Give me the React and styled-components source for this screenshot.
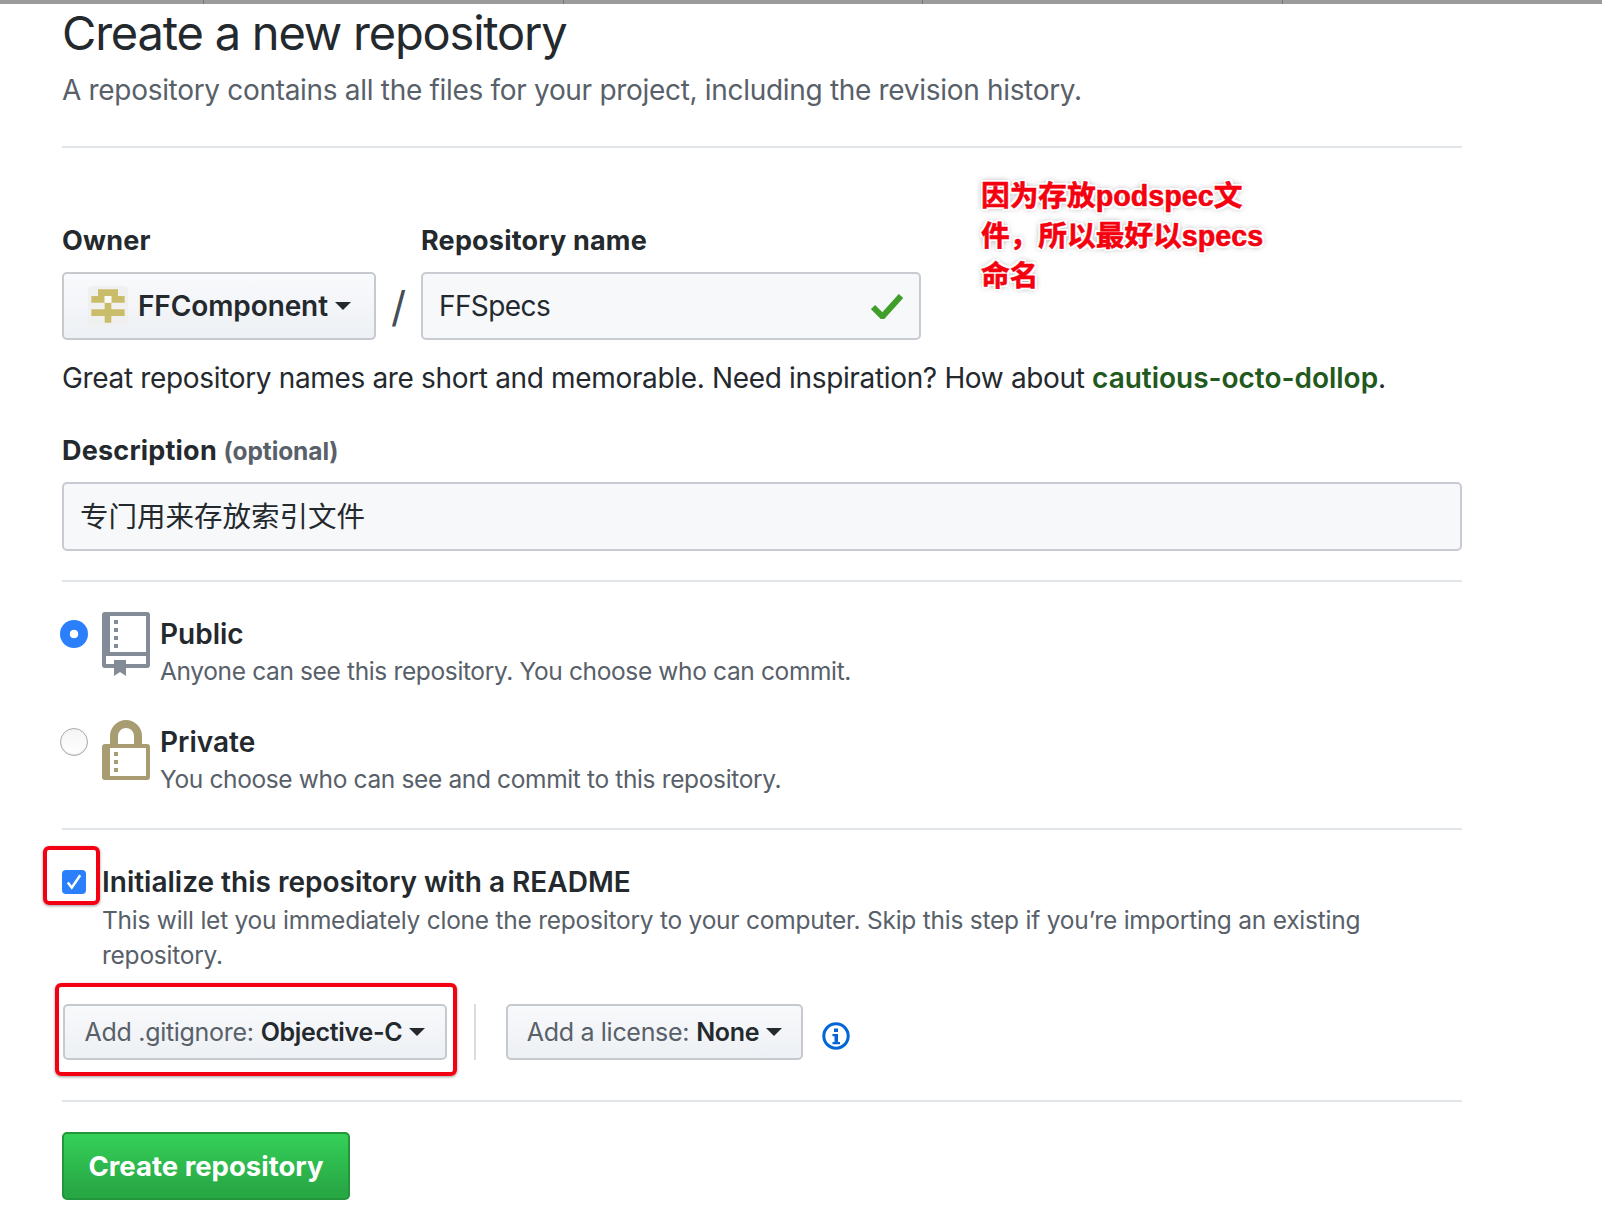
import React from "react";
import styled, { createGlobalStyle } from "styled-components";

const Global = createGlobalStyle`
  html, body { margin: 0; padding: 0; background: #fff; }
  body { font-family: Inter, "Noto Sans CJK SC", "Liberation Sans", sans-serif; color: #24292e; -webkit-font-smoothing: antialiased; }
  * { box-sizing: border-box; }
`;

const Shell = styled.div`position: relative; width: 1602px; height: 1206px; overflow: hidden;`;
const TopBar = styled.div`display: grid; grid-template-columns: 203px 359px 358px 359px 1fr; gap: 1px; height: 4px; background: #777;`;
const TopSegment = styled.div`background: #9b9b9b;`;
const Page = styled.main`width: 1462px; padding-left: 62px;`;
const Title = styled.h1`margin: 0; font-size: 47px; line-height: 57px; font-weight: 400; letter-spacing: -1.2px; white-space: nowrap;`;
const Subtitle = styled.p`margin: 11px 0 0; font-size: 28px; line-height: 36px; letter-spacing: -0.31px; color: #586069; white-space: nowrap;`;
const Divider = styled.hr`border: 0; margin: ${p => p.$top || 0}px 0 0; height: 2px; background: #e1e4e8;`;
const NameRow = styled.div`display: flex; align-items: flex-end; margin-top: 75px;`;
const Field = styled.div`display: flex; flex-direction: column; gap: ${p => p.$gap || 13}px;`;
const Label = styled.label`font-size: 27px; line-height: 36px; font-weight: 700; letter-spacing: 0.2px; white-space: nowrap;`;
const Optional = styled.span`font-size: 24.5px; letter-spacing: -0.1px; color: #586069;`;
const OwnerButton = styled.div`
  display: flex; align-items: center; width: 314px; height: 68px; padding-left: 24px;
  border: 2px solid #c6cace; border-radius: 5px; background: linear-gradient(#f9fafc, #edf0f4);
  font-size: 28px; font-weight: 600; letter-spacing: -0.1px;
`;
const Avatar = styled.svg`width: 40px; height: 40px; margin-right: 10px; border-radius: 4px; flex: none;`;
const Caret = styled.span`
  display: inline-block; width: 0; height: 0; margin-left: 7px; flex: none;
  border-left: 8px solid transparent; border-right: 8px solid transparent; border-top: 8px solid #24292e;
`;
const Slash = styled.span`width: 45px; height: 68px; display: flex; align-items: center; justify-content: center; font-size: 42px; font-weight: 400; color: #444d56;`;
const TextBox = styled.div`
  display: flex; align-items: center; justify-content: space-between;
  width: ${p => p.$width}px; height: ${p => p.$height}px; padding: 0 16px ${p => p.$lift || 0}px;
  border: 2px solid #c8ccd2; border-radius: 5px; background: #f6f8fa; font-size: ${p => p.$size}px; letter-spacing: ${p => p.$tracking || 0}px;
`;
const Hint = styled.p`margin: 18px 0 0; font-size: 28px; line-height: 40px; letter-spacing: -0.34px; white-space: nowrap;`;
const Suggestion = styled.strong`font-weight: 600; letter-spacing: -0.02px; color: #22591c;`;
const DescriptionField = styled(Field)`margin-top: 35px;`;
const OptionList = styled.div`margin-top: 30px;`;
const Option = styled.div`display: flex; height: 108px;`;
const Radio = styled.span`
  display: block; flex: none; width: 28px; height: 28px; margin: 8px 14px 0 -2px; border-radius: 50%;
  ${p => p.$on
    ? "background: radial-gradient(circle, #fff 0 4px, #2b7ffb 4.6px);"
    : "border: 1.5px solid #a8a8a8; background: linear-gradient(#f4f4f4, #fff); box-shadow: inset 0 -1px 1px rgba(0,0,0,.1);"}
`;
const OptionIcon = styled.svg`flex: none; width: 48px; height: ${p => p.$height}px; margin-right: 10px;`;
const OptionText = styled.div`padding-top: 4px;`;
const OptionTitle = styled.div`font-size: 28px; line-height: 36px; font-weight: 600; white-space: nowrap;`;
const OptionDesc = styled.div`margin-top: 1px; font-size: 24.5px; line-height: 36px; letter-spacing: -0.36px; color: #586069; white-space: nowrap;`;
const ReadmeRow = styled.div`display: flex; margin-top: 34px;`;
const CheckBox = styled.span`
  display: flex; align-items: center; justify-content: center; flex: none;
  width: 24px; height: 24px; margin: 6px 16px 0 0; border-radius: 4px; background: #2b7ffb;
`;
const ReadmeText = styled.div`width: 1360px;`;
const ReadmeDesc = styled.div`margin-top: 3px; font-size: 24.5px; line-height: 35px; letter-spacing: -0.24px; color: #586069;`;
const SelectRow = styled.div`display: flex; align-items: flex-start; margin-top: 31px; padding-left: 1px;`;
const SelectButton = styled.div`
  display: flex; align-items: center; justify-content: center; width: ${p => p.$width}px; height: 56px;
  border: 2px solid #c6cace; border-radius: 5px; background: linear-gradient(#f8f9fb, #edf0f4);
  font-size: 25px; letter-spacing: -0.3px; color: #586069; white-space: nowrap;
`;
const SelectValue = styled.strong`margin-left: 7px; font-weight: 600; color: #24292e;`;
const SelectDivider = styled.span`display: block; width: 2px; height: 56px; margin: 0 30px 0 27px; background: #d9dce0;`;
const InfoIcon = styled.svg`width: 28px; height: 28px; margin: 18px 0 0 19px; flex: none;`;
const CreateButton = styled.div`
  display: flex; align-items: center; justify-content: center; width: 288px; height: 68px; margin-top: 30px;
  border: 2px solid #23963c; border-radius: 5px; background: linear-gradient(#34d058, #28a745 90%);
  color: #fff; font-size: 27.5px; font-weight: 700;
`;
const Annotation = styled.div`
  position: absolute; left: 981px; top: 176px; width: 300px;
  font-family: "Liberation Sans", "Noto Sans CJK SC", sans-serif; font-size: 28.7px; line-height: 40px; font-weight: 700; color: #f5000f;
  -webkit-text-stroke: 0.6px #f5000f;
  text-shadow: -2px 0 0 #fff, 2px 0 0 #fff, 0 -2px 0 #fff, 0 2px 0 #fff, -2px -2px 0 #fff, 2px 2px 0 #fff, -2px 2px 0 #fff, 2px -2px 0 #fff, 0 0 6px rgba(0,0,0,.6);
`;
const Highlight = styled.div`
  position: absolute; left: ${p => p.$x}px; top: ${p => p.$y}px; width: ${p => p.$w}px; height: ${p => p.$h}px;
  border: 4px solid #f30012; border-radius: 6px; box-shadow: 0 1px 3px rgba(0,0,0,.4);
`;

const mustard = "#c9bd6a";
const Identicon = () => (
  <Avatar viewBox="0 0 120 120">
    <rect width="120" height="120" fill="#f0f0f0" />
    <path fill={mustard} d="M30 10h60v20h20v20H70V30H50v20H10V30h20zM50 50h20v20H50zM10 70h100v20H70v20H50V90H10z" />
    <rect x="50" y="30" width="20" height="20" fill="#fbfbf6" />
  </Avatar>
);
const BookIcon = () => (
  <OptionIcon viewBox="0 0 48 64" $height={64}>
    <path fill="#838c96" fillRule="evenodd" d="M3 0h42a3 3 0 0 1 3 3v50a3 3 0 0 1-3 3H24v8l-6-4-6 4v-8H3a3 3 0 0 1-3-3V3a3 3 0 0 1 3-3zM8 4v36h36V4zM4 44v8h8v-4h12v4h20v-8z" />
    <path fill="#838c96" d="M12 8h4v4h-4zM12 16h4v4h-4zM12 24h4v4h-4zM12 32h4v4h-4z" />
  </OptionIcon>
);
const LockIcon = () => (
  <OptionIcon viewBox="0 0 48 60" $height={60}>
    <path fill="none" stroke="#a89d72" strokeWidth="8" d="M12 26V16a12 12 0 0 1 24 0v10" />
    <path fill="#a89d72" fillRule="evenodd" d="M3 24h42a3 3 0 0 1 3 3v30a3 3 0 0 1-3 3H3a3 3 0 0 1-3-3V27a3 3 0 0 1 3-3zM8 28v28h36V28z" />
    <path fill="#a89d72" d="M12 32h4v4h-4zM12 40h4v4h-4zM12 48h4v4h-4z" />
  </OptionIcon>
);

export default function App() {
  return (
    <Shell>
      <Global />
      <TopBar>
        {[0, 1, 2, 3, 4].map(i => <TopSegment key={i} />)}
      </TopBar>
      <Page>
        <Title>Create a new repository</Title>
        <Subtitle>A repository contains all the files for your project, including the revision history.</Subtitle>
        <Divider $top={38} />
        <NameRow>
          <Field>
            <Label>Owner</Label>
            <OwnerButton>
              <Identicon />
              FFComponent
              <Caret />
            </OwnerButton>
          </Field>
          <Slash>/</Slash>
          <Field>
            <Label>Repository name</Label>
            <TextBox $width={500} $height={68} $size={28} $tracking={-0.6}>
              FFSpecs
              <svg width="32" height="26" viewBox="0 0 32 26">
                <path d="M2 14l9.5 9.5L30 3" fill="none" stroke="#3f9f2a" strokeWidth="6" />
              </svg>
            </TextBox>
          </Field>
        </NameRow>
        <Hint>Great repository names are short and memorable. Need inspiration? How about <Suggestion>cautious-octo-dollop</Suggestion>.</Hint>
        <DescriptionField $gap={13}>
          <Label>Description <Optional>(optional)</Optional></Label>
          <TextBox $width={1400} $height={69} $size={28.5} $lift={4}>专门用来存放索引文件</TextBox>
        </DescriptionField>
        <Divider $top={29} />
        <OptionList>
          <Option>
            <Radio $on />
            <BookIcon />
            <OptionText>
              <OptionTitle>Public</OptionTitle>
              <OptionDesc>Anyone can see this repository. You choose who can commit.</OptionDesc>
            </OptionText>
          </Option>
          <Option>
            <Radio />
            <LockIcon />
            <OptionText>
              <OptionTitle>Private</OptionTitle>
              <OptionDesc>You choose who can see and commit to this repository.</OptionDesc>
            </OptionText>
          </Option>
        </OptionList>
        <Divider />
        <ReadmeRow>
          <CheckBox>
            <svg width="18" height="18" viewBox="0 0 16 16">
              <path d="M2.5 8.5l3.5 4.5L13.5 2" fill="none" stroke="#fff" strokeWidth="2.2" />
            </svg>
          </CheckBox>
          <ReadmeText>
            <OptionTitle>Initialize this repository with a README</OptionTitle>
            <ReadmeDesc>This will let you immediately clone the repository to your computer. Skip this step if you’re importing an existing repository.</ReadmeDesc>
          </ReadmeText>
        </ReadmeRow>
        <SelectRow>
          <SelectButton $width={384}>
            Add .gitignore:<SelectValue>Objective-C</SelectValue>
            <Caret />
          </SelectButton>
          <SelectDivider />
          <SelectButton $width={297}>
            Add a license:<SelectValue>None</SelectValue>
            <Caret />
          </SelectButton>
          <InfoIcon viewBox="0 0 28 28">
            <circle cx="14" cy="14" r="12.2" fill="none" stroke="#0366d6" strokeWidth="3" />
            <path fill="#0366d6" d="M12 6.5h4v3.5h-4zM10.5 12h5.5v8h2v2.2h-7.5V20h2v-5.8h-2z" />
          </InfoIcon>
        </SelectRow>
        <Divider $top={40} />
        <CreateButton>Create repository</CreateButton>
      </Page>
      <Annotation>因为存放podspec文件，所以最好以specs命名</Annotation>
      <Highlight $x={43} $y={846} $w={57} $h={59} />
      <Highlight $x={55} $y={983} $w={402} $h={93} />
    </Shell>
  );
}
